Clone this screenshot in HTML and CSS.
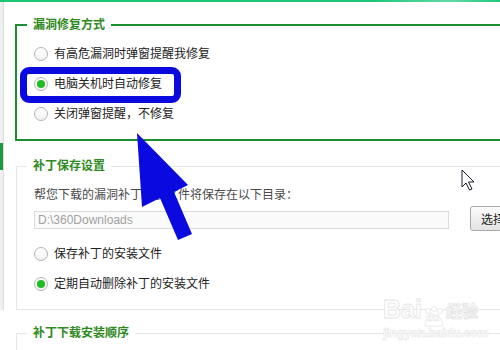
FILE: index.html
```html
<!DOCTYPE html>
<html lang="zh-CN">
<head>
    <meta charset="UTF-8">
    <title>漏洞修复设置</title>
    <link rel="stylesheet" href="styles.css">
</head>
<body>
    <div class="topbar"></div>
    <div class="layout">
        <div class="sidebar"><div class="side-active"></div></div>
        <div class="content">
            <fieldset class="group group-main">
                <legend>漏洞修复方式</legend>
                <label class="option"><span class="radio"></span>有高危漏洞时弹窗提醒我修复</label>
                <label class="option"><span class="radio checked"></span>电脑关机时自动修复</label>
                <label class="option"><span class="radio"></span>关闭弹窗提醒，不修复</label>
            </fieldset>

            <fieldset class="group group-save">
                <legend>补丁保存设置</legend>
                <div class="hint">帮您下载的漏洞补丁安装文件将保存在以下目录：</div>
                <div class="path-row">
                    <div class="path-input">D:\360Downloads</div>
                    <button class="pick-button">选择...</button>
                </div>
                <div class="options">
                    <label class="option"><span class="radio"></span>保存补丁的安装文件</label>
                    <label class="option"><span class="radio checked"></span>定期自动删除补丁的安装文件</label>
                </div>
            </fieldset>

            <fieldset class="group group-order">
                <legend>补丁下载安装顺序</legend>
            </fieldset>
        </div>
    </div>

    <!-- annotation drawn over the screenshot -->
    <div class="mark-box"></div>
    <svg class="overlay" viewBox="0 0 500 350" width="500" height="350">
        <polygon fill="#0a0ae0" points="137,133 142,207 160,198 178,240 192,234 174,192 188,185"/>
        <path d="M462,170 L462,187 L466,183 L469.5,190 L472,189 L468.5,182 L474,182 Z" fill="#fff" stroke="#1a1a2a" stroke-width="1" stroke-linejoin="round"/>
    </svg>

    <div class="watermark">
        <div class="wm-logo">Bai<span class="wm-paw"><svg viewBox="0 0 24 22" width="24" height="22"><circle cx="6" cy="5" r="2.6"/><circle cx="12" cy="3" r="2.6"/><circle cx="18" cy="5" r="2.6"/><path d="M3,20 C3,13 8,9 12,9 C16,9 21,13 21,20 Z"/></svg><span class="wm-du">du</span></span><span class="wm-cn">经验</span></div>
        <div class="wm-url">jingyan.baidu.com</div>
    </div>
</body>
</html>
```

FILE: styles.css
```css
body {
    margin: 0;
    width: 500px;
    height: 350px;
    overflow: hidden;
    background-color: #fff;
    font-family: "Liberation Sans", "Noto Sans CJK SC", sans-serif;
    font-size: 12px;
    color: #222;
    position: relative;
}
.topbar {
    height: 2px;
    background: linear-gradient(90deg, #1dc473 0%, #22c679 75%, #62d9a6 90%, #22c679 100%);
}
.layout {
    display: flex;
    align-items: flex-start;
}
.sidebar {
    width: 3px;
    height: 308px;
    background-color: #efefef;
    border-right: 1px solid #dcdcdc;
    flex-shrink: 0;
}
.side-active {
    margin-top: 141px;
    height: 27px;
    background-color: #1c9b3a;
}
.content {
    flex: 1;
    min-width: 0;
}

/* groups */
.group {
    margin: 0 -60px 0 12px;
    padding: 6px 0 10px 17px;
    border: 1px solid #e6e6e6;
    min-width: 0;
}
.group legend {
    margin-left: -7px;
    padding: 0 6px;
    line-height: 16px;
    font-weight: bold;
    color: #2f8a22;
}
.group-main {
    margin-top: 15px;
    margin-left: 11px;
    border: 2px solid #1b8e30;
}
.group-save {
    margin-top: 17px;
    padding-top: 13px;
}
.group-order {
    margin-top: 15px;
    height: 60px;
}

.option {
    display: flex;
    align-items: center;
    height: 30px;
    line-height: 16px;
}
.radio {
    width: 14px;
    height: 14px;
    box-sizing: border-box;
    border: 1px solid #b4b4b4;
    border-radius: 50%;
    background: linear-gradient(#fff, #f2f2f2);
    margin-right: 6px;
    display: flex;
    align-items: center;
    justify-content: center;
    flex-shrink: 0;
}
.radio.checked::after {
    content: "";
    width: 8px;
    height: 8px;
    border-radius: 50%;
    background-color: #1fbd24;
}

.hint {
    line-height: 16px;
    color: #4a4a4a;
}
.path-row {
    display: flex;
    align-items: flex-start;
    margin-top: 3px;
    height: 25px;
}
.path-input {
    margin-top: 5px;
    width: 415px;
    height: 18px;
    box-sizing: border-box;
    border: 1px solid #dcdcdc;
    background-color: #fafafa;
    color: #a2a2a2;
    line-height: 16px;
    padding-left: 3px;
    flex-shrink: 0;
}
.pick-button {
    margin-left: 21px;
    width: 62px;
    height: 25px;
    padding: 0 0 0 10px;
    text-align: left;
    border: 1px solid #a9a9a9;
    border-radius: 3px;
    background: linear-gradient(#fbfbfb, #e3e3e3);
    font-family: inherit;
    font-size: 12px;
    color: #222;
    flex-shrink: 0;
}
.options {
    margin-top: 8px;
}

/* annotation */
.mark-box {
    position: absolute;
    left: 20px;
    top: 67px;
    width: 161px;
    height: 36px;
    box-sizing: border-box;
    border: 7px solid #0a0ae0;
    border-radius: 9px;
}
.overlay {
    position: absolute;
    left: 0;
    top: 0;
    pointer-events: none;
}

/* watermark */
.watermark {
    position: absolute;
    left: 383px;
    top: 294px;
    width: 100px;
    white-space: nowrap;
    color: #fff;
}
.wm-logo {
    display: flex;
    align-items: flex-end;
    font-size: 25px;
    font-weight: bold;
    line-height: 30px;
    -webkit-text-stroke: 0.8px #e4e4e4;
}
.wm-paw {
    position: relative;
    display: inline-flex;
    flex-direction: column;
    align-items: center;
    width: 22px;
    margin: 0 1px;
}
.wm-paw svg {
    fill: #fff;
    stroke: #e4e4e4;
    stroke-width: 0.8;
    margin-bottom: -4px;
}
.wm-du {
    position: absolute;
    left: 3px;
    bottom: 1px;
    font-size: 11px;
    line-height: 12px;
    -webkit-text-stroke: 0.5px #e4e4e4;
}
.wm-cn {
    font-size: 16px;
    line-height: 24px;
}
.wm-url {
    font-size: 12px;
    font-weight: bold;
    line-height: 14px;
    margin-top: 2px;
    -webkit-text-stroke: 0.5px #e4e4e4;
}
```
